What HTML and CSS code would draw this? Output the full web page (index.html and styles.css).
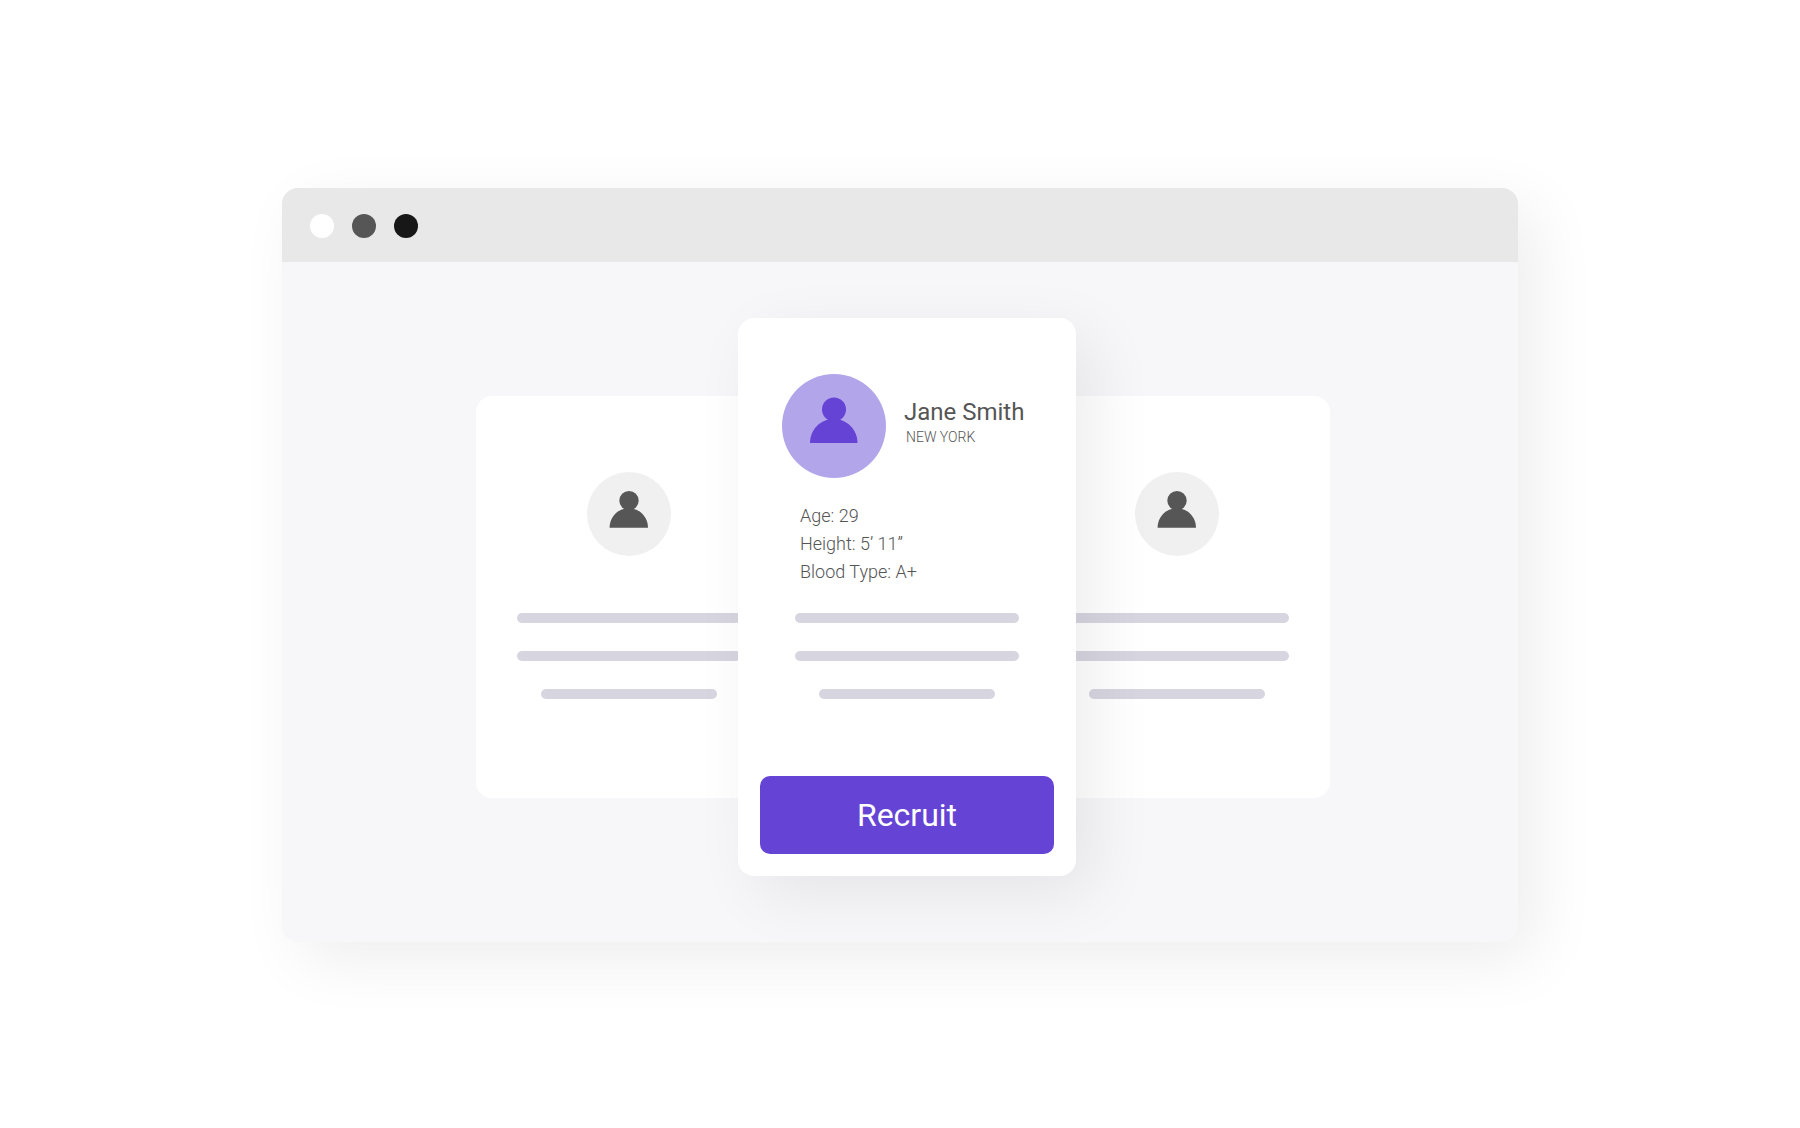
FILE: index.html
```
<!DOCTYPE html>
<html lang="en">
<head>
    <meta charset="UTF-8">
    <meta name="viewport" content="width=device-width, initial-scale=1.0">
    <title>Recruit</title>
    <link rel="stylesheet" href="styles.css">
</head>
<body>
    <svg class="sprite" aria-hidden="true">
        <symbol id="person" viewBox="0 0 104 104">
            <circle cx="52" cy="35.5" r="12"/>
            <path d="M28 69C28 56 38 45 51.7 45S75.5 56 75.5 69Z"/>
        </symbol>
    </svg>

    <main class="window">
        <header class="titlebar">
            <span class="dot dot-white"></span>
            <span class="dot dot-gray"></span>
            <span class="dot dot-black"></span>
        </header>

        <div class="content">
            <div class="card">
                <svg class="avatar"><use href="#person"/></svg>
                <div class="lines">
                    <div class="line"></div>
                    <div class="line"></div>
                    <div class="line short"></div>
                </div>
            </div>

            <section class="card featured">
                <div class="profile">
                    <svg class="avatar"><use href="#person"/></svg>
                    <div class="who">
                        <h1 class="name">Jane Smith</h1>
                        <p class="location">NEW YORK</p>
                    </div>
                </div>
                <ul class="details">
                    <li>Age: 29</li>
                    <li>Height: 5’ 11”</li>
                    <li>Blood Type: A+</li>
                </ul>
                <div class="lines">
                    <div class="line"></div>
                    <div class="line"></div>
                    <div class="line short"></div>
                </div>
                <button class="recruit" type="button">Recruit</button>
            </section>

            <div class="card">
                <svg class="avatar"><use href="#person"/></svg>
                <div class="lines">
                    <div class="line"></div>
                    <div class="line"></div>
                    <div class="line short"></div>
                </div>
            </div>
        </div>
    </main>
</body>
</html>
```

FILE: styles.css
```
* {
    box-sizing: border-box;
}
body {
    font-family: Roboto, "Liberation Sans", sans-serif;
    color: #555;
    background-color: #fff;
    margin: 0;
    padding: 2px 20px 0;
    min-height: 100vh;
    display: flex;
    align-items: center;
    justify-content: center;
}
.sprite {
    position: absolute;
    width: 0;
    height: 0;
}
.window {
    width: 100%;
    max-width: 1236px;
    border-radius: 16px;
    overflow: hidden;
    background-color: #f7f7f9;
    box-shadow: 18px 18px 64px rgba(0, 0, 0, 0.07);
}
.titlebar {
    display: flex;
    gap: 18px;
    padding: 26px 28px 24px;
    background-color: #e8e8e8;
}
.dot {
    width: 24px;
    height: 24px;
    border-radius: 50%;
}
.dot-white {
    background-color: #fff;
}
.dot-gray {
    background-color: #565656;
}
.dot-black {
    background-color: #171717;
}
.content {
    display: flex;
    align-items: center;
    justify-content: center;
    padding: 56px 0 66px 6px;
}
.card {
    flex: none;
    display: flex;
    flex-direction: column;
    align-items: center;
    width: 306px;
    padding: 76px 41px 99px;
    border-radius: 16px;
    background-color: #fff;
}
.avatar {
    flex: none;
    width: 84px;
    height: 84px;
    border-radius: 50%;
    background-color: #f0f0f0;
    fill: #565656;
}
.lines {
    display: flex;
    flex-direction: column;
    align-items: center;
    gap: 28px;
    margin-top: 57px;
}
.line {
    width: 224px;
    height: 10px;
    border-radius: 5px;
    background-color: #d7d5e0;
}
.line.short {
    width: 176px;
}
.featured {
    position: relative;
    z-index: 1;
    align-items: stretch;
    width: 338px;
    margin: 0 -52px 0 -44px;
    padding: 56px 22px 22px;
    box-shadow: 18px 18px 64px rgba(0, 0, 0, 0.075);
}
.featured .avatar {
    width: 104px;
    height: 104px;
    background-color: #b3a5ea;
    fill: #6544d5;
}
.featured .lines {
    margin-top: 27px;
}
.profile {
    display: flex;
    align-items: center;
    gap: 18px;
    padding-left: 22px;
}
.who {
    padding-bottom: 6px;
}
.name {
    margin: 0;
    font-size: 24px;
    font-weight: 400;
    line-height: 28px;
}
.location {
    margin: 0;
    padding-left: 2px;
    font-size: 14px;
    font-weight: 300;
    line-height: 22px;
}
.details {
    list-style: none;
    margin: 24px 0 0;
    padding: 0 0 0 40px;
    font-size: 18px;
    font-weight: 300;
    line-height: 28px;
}
.recruit {
    height: 78px;
    margin-top: 77px;
    border: none;
    border-radius: 10px;
    background-color: #6544d5;
    color: #fff;
    font-family: inherit;
    font-size: 32px;
    cursor: pointer;
}
.recruit:active {
    background-color: #5436bd;
}
```
